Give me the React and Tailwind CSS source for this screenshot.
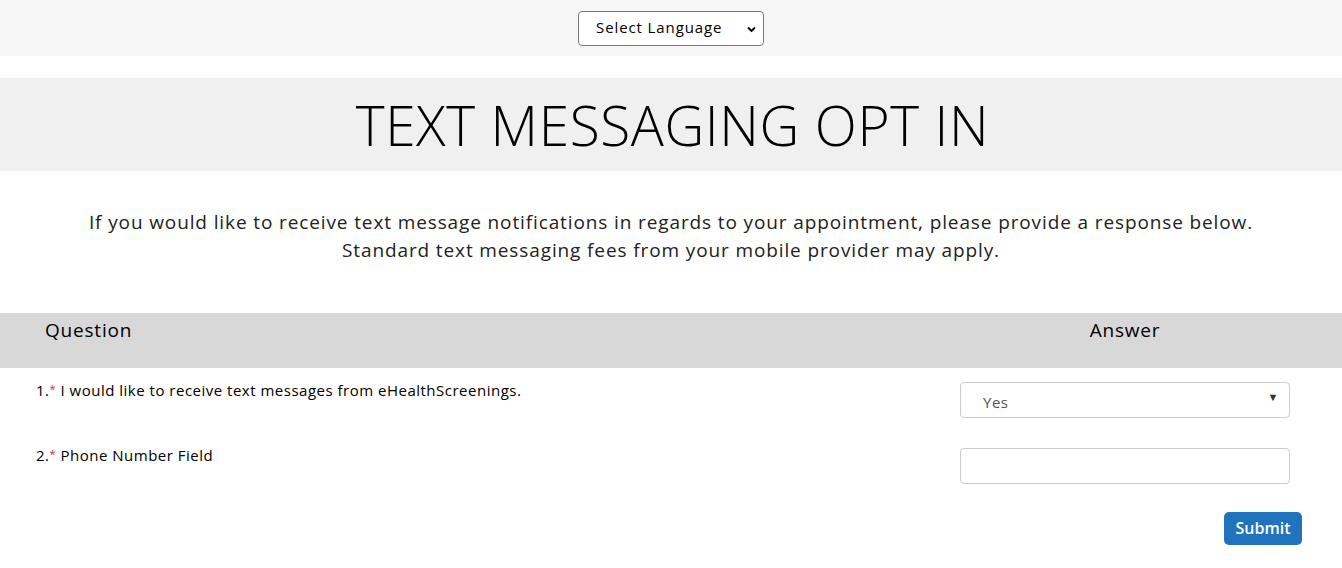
import React from "react";

export default function App() {
  const font = { fontFamily: '"Open Sans", "Liberation Sans", sans-serif' };
  return (
    <div className="w-[1342px] min-h-[568px] bg-white text-[#111]" style={font}>
      <div className="h-[56px] bg-[#f7f7f7] flex items-center justify-center">
        <div className="relative w-[186px] h-[35px] bg-white border border-[#767676] rounded-[4px] flex items-center pl-[17px] pb-[1px] text-[15px] tracking-[0.9px] text-black">
          <span>Select Language</span>
          <svg className="absolute right-[7px] top-[14px]" width="9" height="7" viewBox="0 0 9 7">
            <path d="M1 1.5 L4.5 5 L8 1.5" fill="none" stroke="#000" strokeWidth="1.8" />
          </svg>
        </div>
      </div>
      <div className="h-[22px]" />
      <div className="h-[93px] bg-[#f0f0f0] flex items-center justify-center pl-[3px]">
        <h1 className="text-[55px] font-light tracking-[0.6px] text-black leading-none">TEXT MESSAGING OPT IN</h1>
      </div>
      <div className="pt-[37px] pb-[49px] text-center text-[19px] leading-[28px] tracking-[0.88px] text-[#222]">
        <p>If you would like to receive text message notifications in regards to your appointment, please provide a response below.</p>
        <p>Standard text messaging fees from your mobile provider may apply.</p>
      </div>
      <div className="h-[55px] bg-[#d8d8d8] flex items-start pt-[3px] text-[19px] tracking-[0.8px] text-black">
        <div className="flex-1 pl-[45px]">Question</div>
        <div className="w-[330px] mr-[52px] text-center">Answer</div>
      </div>
      <div className="flex items-start pt-[14px] text-[15px] tracking-[0.5px] font-medium text-black">
        <div className="flex-1 pl-[36px] -mt-[3px]">
          1.<span className="relative top-[-3px] text-[#e0282e] text-[11px]">*</span> I would like to receive text messages from eHealthScreenings.
        </div>
        <div className="relative w-[330px] h-[36px] mr-[52px] border border-[#ccc] rounded-[4px] flex items-center pl-[22px] pt-[5px] text-[15px] font-normal tracking-[0.5px] text-[#555]">
          Yes
          <span className="absolute right-[10px] top-[6px] text-[11px] text-[#333]">▼</span>
        </div>
      </div>
      <div className="flex items-start pt-[30px] text-[15px] tracking-[0.5px] font-medium text-black">
        <div className="flex-1 pl-[36px] -mt-[4px]">
          2.<span className="relative top-[-3px] text-[#e0282e] text-[11px]">*</span> Phone Number Field
        </div>
        <div className="w-[330px] h-[36px] mr-[52px] border border-[#ccc] rounded-[4px]" />
      </div>
      <div className="flex justify-end pt-[28px] pr-[40px]">
        <button className="w-[78px] h-[33px] pb-[1px] bg-[#1f74bd] rounded-[5px] text-white text-[16px] font-semibold">Submit</button>
      </div>
    </div>
  );
}
